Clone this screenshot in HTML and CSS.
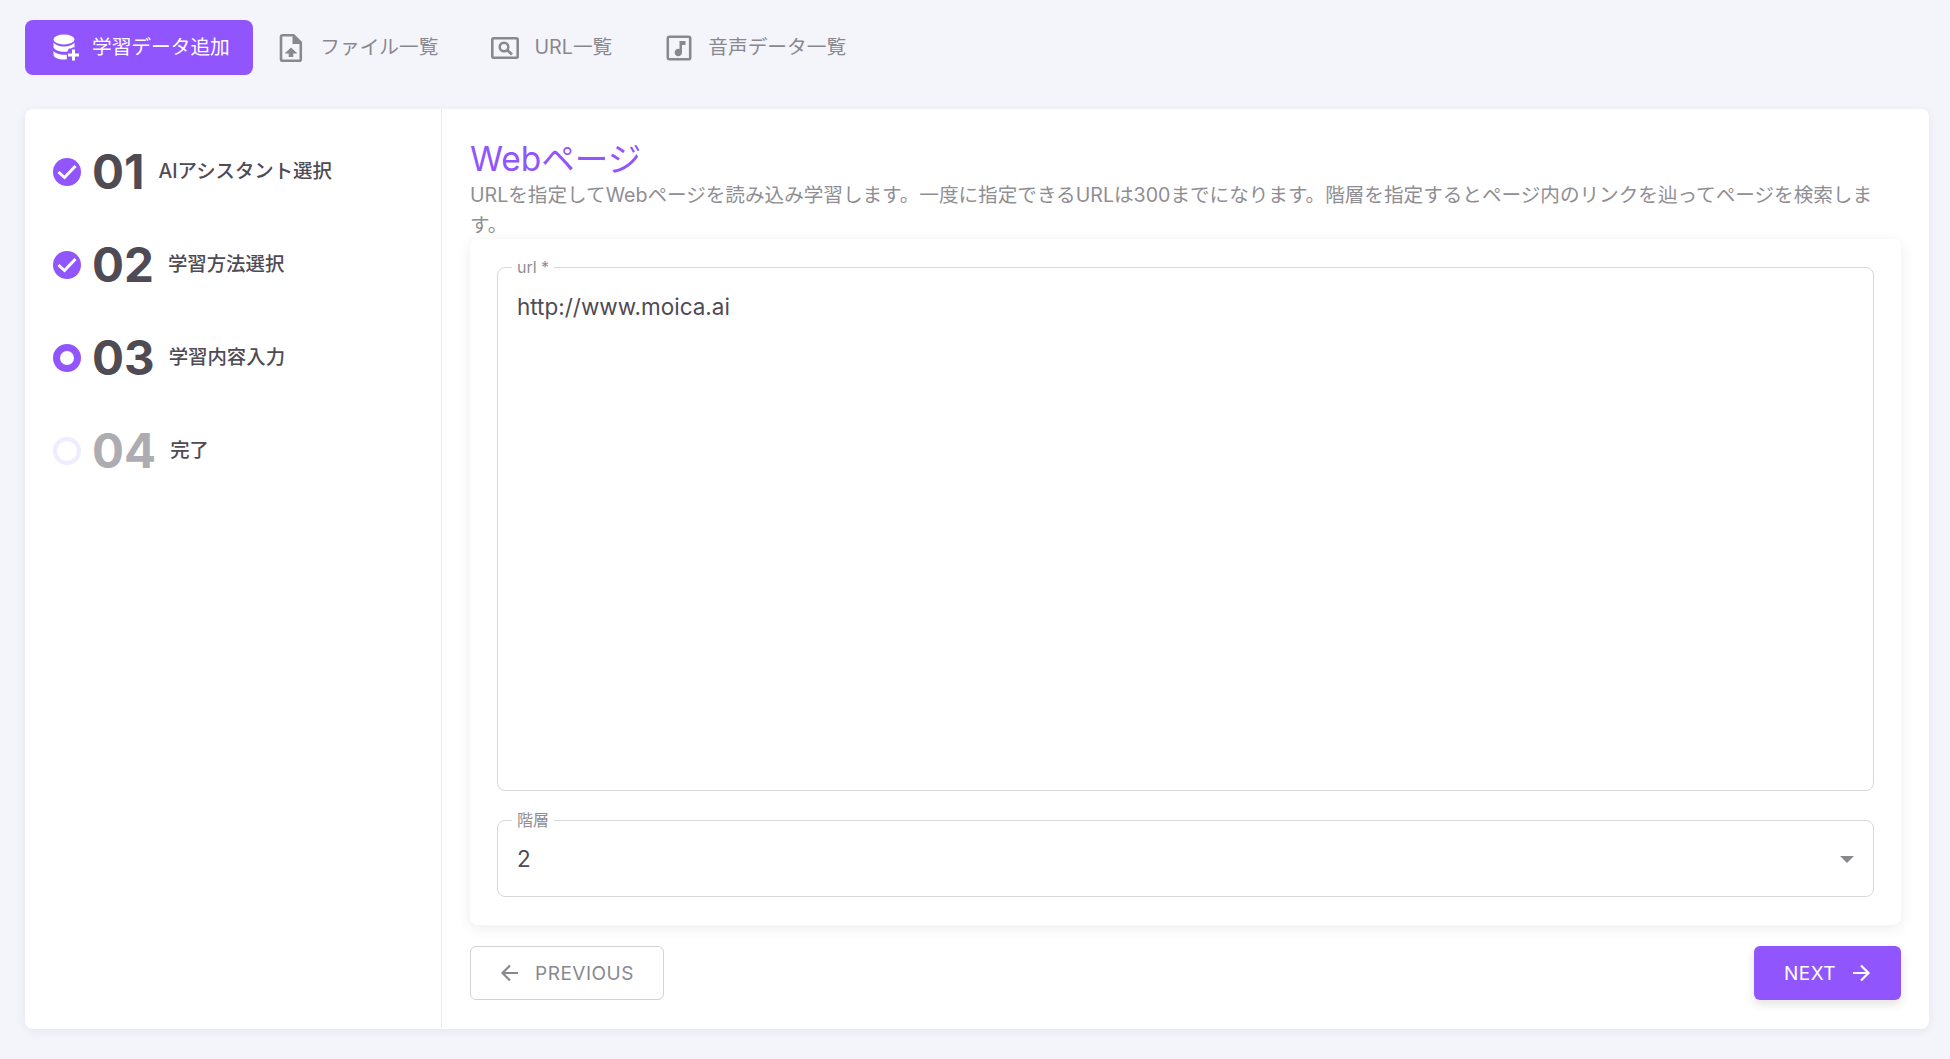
FILE: index.html
```html
<!DOCTYPE html>
<html lang="ja">
<head>
<meta charset="utf-8">
<title>学習データ追加</title>
<link rel="stylesheet" href="styles.css">
</head>
<body>
<nav class="tabs">
  <a class="tab tab-active">
    <svg class="tab-icon" viewBox="0 0 28 28"><ellipse cx="12" cy="5.500" rx="10.500" ry="5" fill="currentColor"/><path d="M1.500 8.500c2 2.800 6.500 4 10.500 4s8.500-1.200 10.500-4v4.800a7 7 0 0 0-3.500 1.200h-2a6 6 0 0 0-1.500 3c-1.200.2-2.400.3-3.500.3-4 0-8.500-1.300-10.500-4.300zM1.500 17c2 2.700 6.500 3.700 10.500 3.700h2.800v4.600c-.9.200-1.900.2-2.800.2-5.500 0-10.500-2-10.500-4.800z" fill="currentColor"/><path d="M21.500 15.500v11M16 21h11" stroke="currentColor" stroke-width="3" fill="none"/></svg>
    <span>学習データ追加</span>
  </a>
  <a class="tab">
    <svg class="tab-icon" viewBox="0 0 28 28"><path d="M5.500 1.300h11l7.300 7.300v16.600a1.500 1.500 0 0 1-1.500 1.500H5.500A1.500 1.500 0 0 1 4 25.200V2.800a1.500 1.500 0 0 1 1.500-1.500z" fill="none" stroke="currentColor" stroke-width="2.600"/><path d="M15.500 1v9h9z" fill="currentColor"/><path d="M14 13.500l6.500 6h-4.200v3.500h-4.600v-3.500H7.500z" fill="currentColor"/></svg>
    <span>ファイル一覧</span>
  </a>
  <a class="tab">
    <svg class="tab-icon" viewBox="0 0 28 28"><rect x="1.300" y="4.300" width="25.400" height="19.400" rx="1.500" fill="none" stroke="currentColor" stroke-width="2.600"/><circle cx="13" cy="13" r="4.300" fill="none" stroke="currentColor" stroke-width="2.500"/><path d="M16 16l5 4.500" stroke="currentColor" stroke-width="2.800"/></svg>
    <span>URL一覧</span>
  </a>
  <a class="tab">
    <svg class="tab-icon" viewBox="0 0 28 28"><rect x="2.800" y="2.800" width="22.400" height="22.400" rx="1.500" fill="none" stroke="currentColor" stroke-width="2.600"/><path d="M14.500 7H20.500v4H17v7.500a3.700 3.700 0 1 1-2.500-3.500z" fill="currentColor"/></svg>
    <span>音声データ一覧</span>
  </a>
</nav>

<main class="card">
  <aside class="steps">
    <div class="step">
      <svg class="step-dot" viewBox="0 0 28 28"><circle cx="14" cy="14" r="14" class="dot-fill"/><path d="M5.500 14l6 5.500 11-11.500" class="dot-check"/></svg>
      <span class="step-num">01</span>
      <span class="step-label">AIアシスタント選択</span>
    </div>
    <div class="step">
      <svg class="step-dot" viewBox="0 0 28 28"><circle cx="14" cy="14" r="14" class="dot-fill"/><path d="M5.500 14l6 5.500 11-11.500" class="dot-check"/></svg>
      <span class="step-num">02</span>
      <span class="step-label">学習方法選択</span>
    </div>
    <div class="step">
      <svg class="step-dot" viewBox="0 0 28 28"><circle cx="14" cy="14" r="10.500" class="dot-ring"/></svg>
      <span class="step-num">03</span>
      <span class="step-label">学習内容入力</span>
    </div>
    <div class="step step-todo">
      <svg class="step-dot" viewBox="0 0 28 28"><circle cx="14" cy="14" r="12" class="dot-empty"/></svg>
      <span class="step-num">04</span>
      <span class="step-label">完了</span>
    </div>
  </aside>

  <section class="content">
    <h1 class="title">Webページ</h1>
    <p class="desc">URLを指定してWebページを読み込み学習します。一度に指定できるURLは300までになります。階層を指定するとページ内のリンクを辿ってページを検索します。</p>
    <div class="form-card">
      <fieldset class="field field-url">
        <legend>url *</legend>
        <div class="field-value">http://www.moica.ai</div>
      </fieldset>
      <fieldset class="field field-select">
        <legend>階層</legend>
        <div class="field-value">2</div>
        <svg class="caret" viewBox="0 0 14 7"><path d="M0 0h14L7 7z"/></svg>
      </fieldset>
    </div>
    <div class="actions">
      <button class="btn btn-prev">
        <svg class="btn-icon" viewBox="0 0 20 20"><path d="M18 10H3M10 2.500L2.500 10l7.500 7.500" fill="none" stroke="currentColor" stroke-width="2.200"/></svg>
        PREVIOUS
      </button>
      <button class="btn btn-next">
        NEXT
        <svg class="btn-icon" viewBox="0 0 20 20"><path d="M2 10h15M10 2.500l7.500 7.500-7.500 7.500" fill="none" stroke="currentColor" stroke-width="2.200"/></svg>
      </button>
    </div>
  </section>
</main>
</body>
</html>
```
FILE: styles.css
```css
* { box-sizing: border-box; }

html, body { height: 100%; }

body {
  margin: 0;
  padding: 20px 21px 30px 25px;
  background: #f4f5fa;
  color: #4a4650;
  font-family: Inter, "Noto Sans CJK JP", sans-serif;
  display: flex;
  flex-direction: column;
  gap: 34px;
  overflow: hidden;
}

.tabs { display: flex; align-items: center; height: 55px; }

.tab {
  display: flex;
  align-items: center;
  height: 55px;
  padding: 0 29px 0 24px;
  gap: 15px;
  font-size: 19.700px;
  line-height: 1;
  color: #8a888f;
}

.tab-active {
  background: #9155fd;
  color: #fff;
  border-radius: 8px;
  padding: 0 23.500px 0 27px;
  gap: 12px;
}

.tab-icon { width: 28px; height: 28px; flex: none; }

.card {
  flex: 1;
  display: flex;
  background: #fff;
  border-radius: 8px;
  box-shadow: 0 2px 10px rgba(58, 53, 65, 0.08);
}

.steps {
  width: 417px;
  flex: none;
  border-right: 1px solid #ececee;
  padding: 39px 0 0 28px;
  display: flex;
  flex-direction: column;
  gap: 45px;
}

.step { display: flex; align-items: center; height: 48px; }

.step-dot { width: 28px; height: 28px; flex: none; margin-right: 11px; }
.dot-fill { fill: #9155fd; }
.dot-check { fill: none; stroke: #fff; stroke-width: 3; }
.dot-ring { fill: #fff; stroke: #9155fd; stroke-width: 7; }
.dot-empty { fill: #fff; stroke: #f0ebfe; stroke-width: 4; }

.step-num {
  font-size: 47.500px;
  font-weight: 700;
  line-height: 48px;
  color: #4f4b55;
  margin-right: 14px;
}

.step-label {
  font-size: 19.400px;
  font-weight: 500;
  line-height: 1;
  color: #4f4b55;
}

.step-todo .step-num { color: #adacb1; }

.content {
  flex: 1;
  min-width: 0;
  padding: 27px 28px 0;
  display: flex;
  flex-direction: column;
}

.title {
  margin: 0;
  font-size: 33.500px;
  font-weight: 400;
  line-height: 46px;
  color: #9155fd;
}

.desc {
  margin: -2px 0 -1px;
  font-size: 19.600px;
  line-height: 30px;
  color: #8f8e94;
}

.form-card {
  background: #fff;
  border-radius: 8px;
  box-shadow: 0 3px 14px rgba(58, 53, 65, 0.09);
  padding: 18px 27px 28px;
  display: flex;
  flex-direction: column;
  gap: 19px;
}

.field {
  margin: 0;
  padding: 0 19px;
  border: 1px solid #d8d8da;
  border-radius: 8px;
  position: relative;
  min-width: 0;
}

.field legend {
  padding: 0 5px;
  margin-left: -5px;
  font-size: 16px;
  line-height: 20px;
  color: #8f8e94;
}

.field-url { height: 534px; }
.field-select { height: 87px; }

.field-value {
  font-size: 22.500px;
  line-height: 30px;
  color: #4f4b55;
}

.field-url .field-value { padding-top: 15px; }
.field-select .field-value { padding-top: 14px; }

.caret {
  position: absolute;
  right: 19px;
  top: 26px;
  width: 14px;
  height: 7px;
  fill: #8a888f;
}

.actions {
  display: flex;
  justify-content: space-between;
  margin-top: 21px;
}

.btn {
  height: 54px;
  display: flex;
  align-items: center;
  justify-content: center;
  gap: 15px;
  font-family: inherit;
  font-size: 19px;
  font-weight: 400;
  letter-spacing: 0.5px;
  border-radius: 6px;
  cursor: pointer;
}

.btn-icon { width: 20px; height: 20px; flex: none; }

.btn-prev {
  width: 194px;
  background: #fff;
  border: 1px solid #d3d3d5;
  color: #8a888f;
}

.btn-next {
  width: 147px;
  background: #9155fd;
  border: 0;
  color: #fff;
  box-shadow: 0 4px 10px rgba(58, 53, 65, 0.14);
}
```
